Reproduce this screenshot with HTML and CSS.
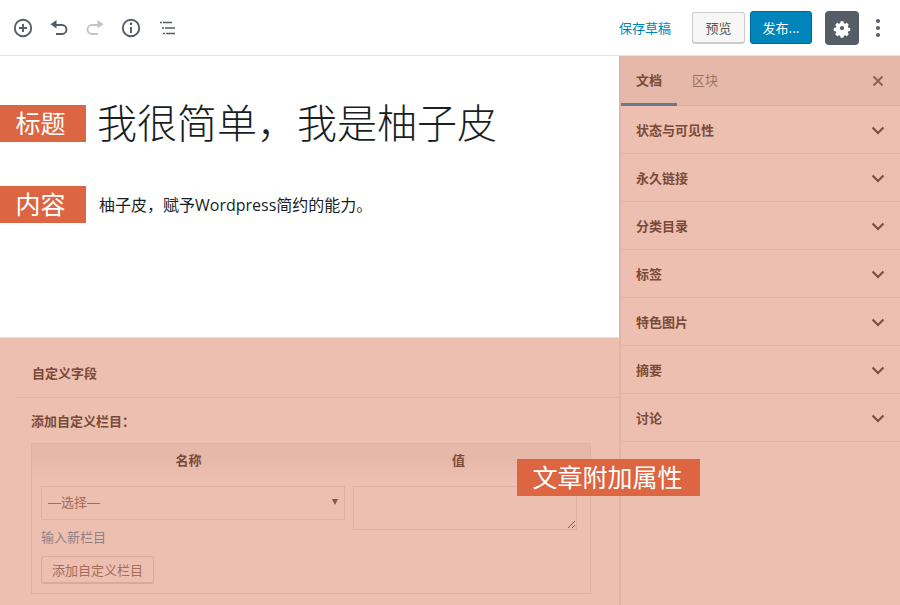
FILE: index.html
```html
<!DOCTYPE html>
<html lang="zh-CN">
<head>
    <meta charset="UTF-8">
    <meta name="viewport" content="width=device-width, initial-scale=1.0">
    <title>编辑文章</title>
    <link rel="stylesheet" href="styles.css">
</head>
<body>
    <div class="toolbar">
        <div class="tools">
            <svg class="tool" viewBox="0 0 24 24"><circle cx="12" cy="12" r="8.2" class="line"/><path d="M12 8v8M8 12h8" class="line"/></svg>
            <svg class="tool" viewBox="0 0 24 24"><path d="M7 9h8a4.500 4.500 0 0 1 0 9h-6" class="line"/><path d="M9.500 4v8.500L3.500 8.200z" class="fill"/></svg>
            <svg class="tool tool-off" viewBox="0 0 24 24"><path d="M17 9H9a4.500 4.500 0 0 0 0 9h6" class="line"/><path d="M14.500 4v8.500l6-4.300z" class="fill"/></svg>
            <svg class="tool" viewBox="0 0 24 24"><circle cx="12" cy="12" r="8.200" class="line"/><path d="M12 11v6" class="line"/><circle cx="12" cy="7.800" r="1.300" class="fill"/></svg>
            <svg class="tool" viewBox="0 0 24 24"><path d="M5 6.500h2M8 6.500h9M7 12h2M10 12h10M8 17.500h2M11 17.500h9" class="thin"/></svg>
        </div>
        <div class="actions">
            <a class="save">保存草稿</a>
            <button class="btn-preview">预览</button>
            <button class="btn-publish">发布...</button>
            <button class="btn-gear">
                <svg viewBox="0 0 24 24" width="20" height="20"><path fill-rule="evenodd" fill="#fff" d="M10 2.500h4l.6 2.700 1.800.8 2.400-1.500 2.800 2.800-1.500 2.400.8 1.800 2.700.6v4l-2.700.6-.8 1.800 1.500 2.400-2.800 2.800-2.400-1.500-1.800.8-.6 2.700h-4l-.6-2.700-1.800-.8-2.400 1.500-2.800-2.800 1.500-2.400-.8-1.800-2.700-.6v-4l2.700-.6.8-1.800-1.500-2.400 2.800-2.800 2.400 1.500 1.800-.8zM12 9a3 3 0 1 0 0 6 3 3 0 0 0 0-6z" transform="translate(1.800 1.800) scale(.85)"/></svg>
            </button>
            <div class="dots"><i></i><i></i><i></i></div>
        </div>
    </div>

    <div class="workspace">
        <div class="editor">
            <div class="canvas">
                <h1 class="post-title">我很简单，我是柚子皮</h1>
                <p class="post-text">柚子皮，赋予Wordpress简约的能力。</p>
                <span class="tag tag-title">标题</span>
                <span class="tag tag-content">内容</span>
            </div>
            <div class="meta">
                <h3 class="meta-title">自定义字段</h3>
                <div class="meta-body">
                    <p class="meta-label">添加自定义栏目：</p>
                    <div class="field-table">
                        <div class="field-head"><span>名称</span><span>值</span></div>
                        <div class="field-row">
                            <div class="field-name">
                                <div class="select">—选择—<i></i></div>
                                <a class="new-field">输入新栏目</a>
                                <button class="btn-add">添加自定义栏目</button>
                            </div>
                            <div class="field-value">
                                <div class="textarea">
                                    <svg class="grip" viewBox="0 0 9 9" width="9" height="9"><path d="M1 8l7-7M5 8l3-3" stroke="#7d5a4e" stroke-width="1"/></svg>
                                </div>
                            </div>
                        </div>
                    </div>
                </div>
            </div>
        </div>

        <div class="sidebar">
            <div class="tabs">
                <span class="tab tab-on">文档</span>
                <span class="tab">区块</span>
                <svg class="close" viewBox="0 0 12 12" width="12" height="12"><path d="M1.500 1.500l9 9M10.500 1.500l-9 9"/></svg>
            </div>
            <div class="panel">状态与可见性<svg class="chevron" viewBox="0 0 14 9"><path d="M1.500 1.500L7 7l5.500-5.500"/></svg></div>
            <div class="panel">永久链接<svg class="chevron" viewBox="0 0 14 9"><path d="M1.500 1.500L7 7l5.500-5.500"/></svg></div>
            <div class="panel">分类目录<svg class="chevron" viewBox="0 0 14 9"><path d="M1.500 1.500L7 7l5.500-5.500"/></svg></div>
            <div class="panel">标签<svg class="chevron" viewBox="0 0 14 9"><path d="M1.500 1.500L7 7l5.500-5.500"/></svg></div>
            <div class="panel">特色图片<svg class="chevron" viewBox="0 0 14 9"><path d="M1.500 1.500L7 7l5.500-5.500"/></svg></div>
            <div class="panel">摘要<svg class="chevron" viewBox="0 0 14 9"><path d="M1.500 1.500L7 7l5.500-5.500"/></svg></div>
            <div class="panel">讨论<svg class="chevron" viewBox="0 0 14 9"><path d="M1.500 1.500L7 7l5.500-5.500"/></svg></div>
        </div>

        <span class="tag tag-meta">文章附加属性</span>
    </div>
</body>
</html>
```

FILE: styles.css
```css
* {
    box-sizing: border-box;
}
body {
    margin: 0;
    width: 900px;
    height: 605px;
    overflow: hidden;
    background: #fff;
    font-family: "Noto Sans CJK SC", "Liberation Sans", sans-serif;
    color: #32373c;
}
button {
    font-family: inherit;
    cursor: pointer;
}

/* top bar */
.toolbar {
    height: 56px;
    display: flex;
    align-items: center;
    justify-content: space-between;
    border-bottom: 1px solid #e2e4e7;
    padding: 0 20px 0 11px;
}
.tools {
    display: flex;
    gap: 12px;
}
.tool {
    width: 24px;
    height: 24px;
}
.line, .thin {
    fill: none;
    stroke: #555d66;
    stroke-width: 1.9;
}
.thin {
    stroke-width: 1.5;
}
.fill {
    fill: #555d66;
}
.tool-off {
    opacity: .35;
}
.actions {
    display: flex;
    align-items: center;
}
.save {
    font-size: 13px;
    color: #0085ba;
    margin-right: 21px;
}
.btn-preview {
    width: 53px;
    height: 32px;
    margin-right: 5px;
    padding: 0;
    font-size: 13px;
    color: #555;
    background: #f7f7f7;
    border: 1px solid #ccc;
    border-bottom-width: 2px;
    border-radius: 3px;
}
.btn-publish {
    width: 62px;
    height: 33px;
    margin-right: 13px;
    padding: 0;
    font-size: 13px;
    color: #fff;
    background: #0085ba;
    border: 1px solid #006799;
    border-radius: 3px;
}
.btn-gear {
    width: 34px;
    height: 34px;
    margin-right: 17px;
    padding: 0;
    display: flex;
    align-items: center;
    justify-content: center;
    background: #555d66;
    border: none;
    border-radius: 4px;
}
.dots {
    display: flex;
    flex-direction: column;
    gap: 3px;
}
.dots i {
    width: 4px;
    height: 4px;
    border-radius: 50%;
    background: #555d66;
}

/* main area */
.workspace {
    position: relative;
    display: flex;
    height: 549px;
}
.editor {
    width: 619px;
    display: flex;
    flex-direction: column;
}
.canvas {
    position: relative;
    height: 282px;
    padding: 45px 0 0 97px;
    border-bottom: 1px solid #e2e4e7;
}
.post-title {
    margin: 0;
    font-family: "Liberation Serif", "Noto Sans CJK SC", serif;
    font-size: 40px;
    line-height: 48px;
    font-weight: 300;
    color: #191e23;
}
.post-text {
    margin: 43px 0 0 2px;
    font-family: "Open Sans", "Noto Sans CJK SC", sans-serif;
    font-size: 16px;
    line-height: 26px;
    color: #191e23;
}
.tag {
    position: absolute;
    left: 0;
    width: 86px;
    height: 37px;
    padding-right: 5px;
    background: #dc6542;
    color: #fff;
    font-size: 25px;
    line-height: 35px;
    font-weight: 400;
    text-align: center;
}
.tag-title {
    top: 49px;
}
.tag-content {
    top: 130px;
}
.tag-meta {
    left: 517px;
    top: 403px;
    width: 183px;
    padding-right: 2px;
    z-index: 2;
}

/* custom fields box */
.meta {
    flex: 1;
    background: #edbfb1;
    padding-left: 16px;
    color: #7a4a38;
}
.meta-title {
    margin: 0;
    height: 60px;
    padding-left: 16px;
    font-size: 13px;
    line-height: 70px;
    font-weight: 700;
    border-bottom: 1px solid #e3b4a6;
}
.meta-body {
    padding: 13px 28px 0 15px;
}
.meta-label {
    margin: 0 0 12px;
    font-size: 13px;
    line-height: 20px;
    font-weight: 700;
}
.field-table {
    height: 151px;
    border: 1px solid #e0b1a3;
}
.field-head {
    display: grid;
    grid-template-columns: 313px 1fr;
    height: 34px;
    padding-right: 18px;
    background: linear-gradient(#e5b8aa 40%, #edbfb1);
    font-size: 13px;
    line-height: 32px;
    font-weight: 700;
    text-align: center;
}
.field-row {
    display: flex;
    gap: 8px;
    padding: 8px 13px 0 9px;
}
.field-name {
    width: 304px;
}
.field-value {
    flex: 1;
}
.select {
    position: relative;
    height: 34px;
    padding-left: 6px;
    border: 1px solid #e0b1a3;
    font-family: "Liberation Sans", "Noto Sans CJK SC", sans-serif;
    font-size: 13px;
    line-height: 32px;
    color: #a46c5a;
}
.select i {
    position: absolute;
    right: 6px;
    top: 12px;
    border: 3px solid transparent;
    border-top: 6px solid #7d5a4e;
    border-bottom: 0;
}
.new-field {
    display: block;
    margin-top: 7px;
    font-size: 13px;
    line-height: 19px;
    color: #8f7f82;
}
.btn-add {
    display: block;
    width: 113px;
    height: 28px;
    margin-top: 10px;
    padding: 0;
    font-size: 13px;
    color: #a46c5a;
    background: #edbfb1;
    border: 1px solid #dba998;
    border-bottom-width: 2px;
    border-radius: 3px;
}
.textarea {
    position: relative;
    height: 44px;
    border: 1px solid #e0b1a3;
}
.grip {
    position: absolute;
    right: 0;
    bottom: 0;
}

/* sidebar */
.sidebar {
    width: 281px;
    background: #edbfb1;
    border-left: 2px solid #e3b4a6;
    color: #7a4a38;
}
.tabs {
    display: flex;
    align-items: center;
    height: 50px;
    background: #e5b8aa;
    border-bottom: 1px solid #dcab9c;
    position: relative;
}
.tab {
    width: 56px;
    height: 50px;
    font-size: 13px;
    line-height: 48px;
    text-align: center;
    color: #a0705f;
}
.tab-on {
    font-weight: 700;
    color: #7a4a38;
    border-bottom: 3px solid #667b85;
}
.close {
    margin-left: auto;
    margin-right: 16px;
    fill: none;
    stroke: #93604f;
    stroke-width: 2;
}
.panel {
    display: flex;
    align-items: center;
    justify-content: space-between;
    height: 48px;
    padding: 0 15px;
    font-size: 13px;
    font-weight: 700;
    border-bottom: 1px solid #e3b4a6;
}
.chevron {
    width: 14px;
    height: 9px;
    margin-top: 1px;
    fill: none;
    stroke: #7d4d3b;
    stroke-width: 2;
}
```
